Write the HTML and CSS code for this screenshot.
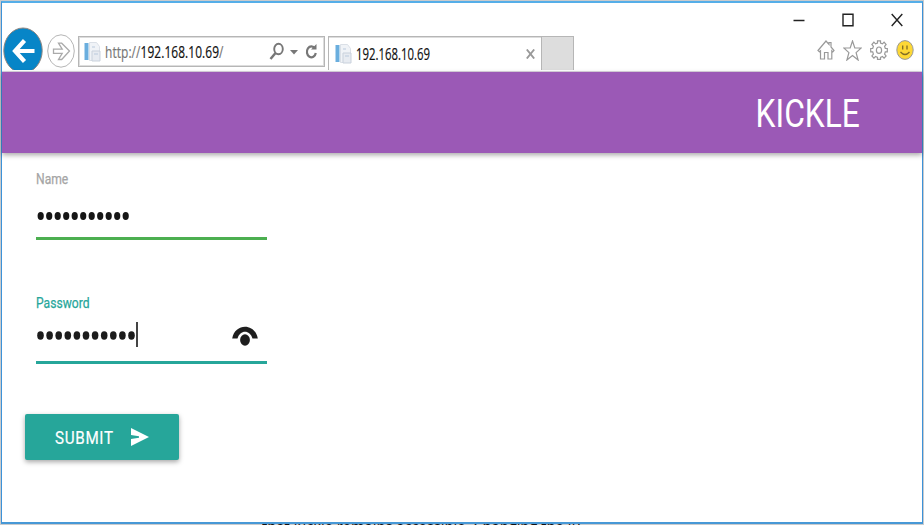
FILE: index.html
```
<!DOCTYPE html>
<html lang="en">
<head>
<meta charset="utf-8">
<title>KICKLE</title>
<link rel="stylesheet" href="styles.css">
</head>
<body>
<div class="window">
  <header class="chrome">
    <div class="caption">
      <svg width="12" height="14" viewBox="0 0 12 14"><path d="M.5 7.5h11" stroke="#222" stroke-width="1.5"/></svg>
      <svg width="12" height="14" viewBox="0 0 12 14"><path d="M1 1.2h10v11.6H1z" fill="none" stroke="#222" stroke-width="1.4"/></svg>
      <svg width="12" height="14" viewBox="0 0 12 14"><path d="M.7 1 11.3 13M11.3 1 .7 13" stroke="#222" stroke-width="1.4"/></svg>
    </div>
    <div class="toolbar">
      <svg class="back" width="41" height="43" viewBox="0 0 41 43"><ellipse cx="20" cy="23.500" rx="19.2" ry="22.5" fill="#0785c7" stroke="#8d8580" stroke-width="1"/><path d="M31.500 24H11.500M21.500 13.500 12 24l9.500 10.500" fill="none" stroke="#fff" stroke-width="4.200"/></svg>
      <svg class="forward" width="28" height="34" viewBox="0 0 28 34"><ellipse cx="14" cy="17" rx="13.300" ry="16.200" fill="#fff" stroke="#b5b5b5"/><path d="M6.500 15.200h8.700l-3.700-6h3.200L22.500 17l-7.800 8.500h-3.200l3.700-6.200H6.500z" fill="#fff" stroke="#aaa" stroke-width="1.300"/></svg>
      <div class="address">
        <svg class="page" width="17" height="20" viewBox="0 0 17 20"><path d="M.5 1h4v17h-4z" fill="#6aaede"/><path d="M5.500.5h7l3 4v14h-10z" fill="#f0f3f7" stroke="#dbe0e7"/><path d="M8 9h8v10H8z" fill="#e7ebf1" stroke="#c9d1dc"/><path d="M8 5h3M10 12h4" stroke="#b9c9dc"/></svg>
        <span class="url"><span class="dim">http://</span>192.168.10.69<span class="dim">/</span></span>
        <svg class="tools" width="50" height="20" viewBox="0 0 50 20"><ellipse cx="9.500" cy="7" rx="4.300" ry="5.200" fill="none" stroke="#777" stroke-width="1.900"/><path d="M6.500 11 1.500 17" stroke="#777" stroke-width="2.500"/><path d="M21 8h8l-4 4.500z" fill="#777"/><path d="M46 6.500a4.500 5.500 0 1 0 .8 4.500" fill="none" stroke="#777" stroke-width="2.200"/><path d="M42 7.500h5.500V2z" fill="#777"/></svg>
      </div>
      <div class="tab">
        <svg class="page" width="17" height="20" viewBox="0 0 17 20"><path d="M.5 1h4v17h-4z" fill="#6aaede"/><path d="M5.500.5h7l3 4v14h-10z" fill="#f0f3f7" stroke="#dbe0e7"/><path d="M8 9h8v10H8z" fill="#e7ebf1" stroke="#c9d1dc"/><path d="M8 5h3M10 12h4" stroke="#b9c9dc"/></svg>
        <span class="tab-title">192.168.10.69</span>
        <svg class="tab-close" width="9" height="10" viewBox="0 0 9 10"><path d="M.8.5 8.200 9.500M8.200.5.8 9.500" stroke="#999" stroke-width="1.900"/></svg>
      </div>
      <div class="new-tab"></div>
      <div class="actions">
        <svg width="18" height="20" viewBox="0 0 18 20"><path d="M1 10.500 9 1l3 3.500V2.500h2v4.500l3 3.500-1.200 1.300-1-1V19H11v-6.500H7.500V19H3.500v-8.200l-1.200 1z" fill="#fff" stroke="#999" stroke-width="1.200"/></svg>
        <svg width="19" height="21" viewBox="0 0 19 21"><path d="m9.500 1 2.300 7h6.400l-5.100 4.600 2 7.400-5.600-4.500L3.900 20l2-7.400L.8 8h6.400z" fill="#fff" stroke="#999" stroke-width="1.200"/></svg>
        <svg width="18" height="20" viewBox="0 0 18 20"><path d="M7.500 3V.8h3V3l2 .9 1.600-1.700 2 2.300-1.500 1.800.7 2.200h2v3.400h-2l-.7 2.200 1.500 1.900-2 2.200-1.600-1.700-2 .9v2h-3v-2l-2-.9-1.600 1.700-2-2.200 1.500-1.900-.7-2.200h-2V8.500h2l.7-2.200-1.500-1.800 2-2.300 1.600 1.700z" fill="#fff" stroke="#999" stroke-width="1.200"/><ellipse cx="9" cy="10.200" rx="2.600" ry="3.200" fill="#fff" stroke="#999" stroke-width="1.200"/></svg>
        <svg width="18" height="20" viewBox="0 0 18 20"><ellipse cx="9" cy="10" rx="8.200" ry="9.400" fill="#fdd835" stroke="#999"/><path d="M6.700 5.500v4M11 5.500v4M4.500 12q4.500 5 9 0" fill="none" stroke="#806c25" stroke-width="1.300"/></svg>
      </div>
    </div>
  </header>
  <nav class="brand-bar"><h1 class="brand">KICKLE</h1></nav>
  <main class="form">
    <div class="field name">
      <label class="label">Name</label>
      <div class="value"><svg width="94" height="10" viewBox="0 0 94 10"><g fill="#161616"><ellipse cx="4.700" cy="5" rx="3.100" ry="4"/><ellipse cx="13.200" cy="5" rx="3.100" ry="4"/><ellipse cx="21.700" cy="5" rx="3.100" ry="4"/><ellipse cx="30.200" cy="5" rx="3.100" ry="4"/><ellipse cx="38.700" cy="5" rx="3.100" ry="4"/><ellipse cx="47.200" cy="5" rx="3.100" ry="4"/><ellipse cx="55.700" cy="5" rx="3.100" ry="4"/><ellipse cx="64.200" cy="5" rx="3.100" ry="4"/><ellipse cx="72.700" cy="5" rx="3.100" ry="4"/><ellipse cx="81.200" cy="5" rx="3.100" ry="4"/><ellipse cx="89.700" cy="5" rx="3.100" ry="4"/></g></svg></div>
    </div>
    <div class="field password">
      <label class="label">Password</label>
      <div class="value"><svg width="100" height="10" viewBox="0 0 100 10"><g fill="#1c1c1c"><ellipse cx="4.500" cy="5.500" rx="3.300" ry="4.200"/><ellipse cx="13.600" cy="5.500" rx="3.300" ry="4.200"/><ellipse cx="22.700" cy="5.500" rx="3.300" ry="4.200"/><ellipse cx="31.800" cy="5.500" rx="3.300" ry="4.200"/><ellipse cx="40.900" cy="5.500" rx="3.300" ry="4.200"/><ellipse cx="50" cy="5.500" rx="3.300" ry="4.200"/><ellipse cx="59.100" cy="5.500" rx="3.300" ry="4.200"/><ellipse cx="68.200" cy="5.500" rx="3.300" ry="4.200"/><ellipse cx="77.300" cy="5.500" rx="3.300" ry="4.200"/><ellipse cx="86.400" cy="5.500" rx="3.300" ry="4.200"/><ellipse cx="95.500" cy="5.500" rx="3.300" ry="4.200"/></g></svg><i class="caret"></i>
      <svg class="reveal" width="26" height="20" viewBox="0 0 26 20"><path d="M.2 12.500C3-3.200 23-3.200 25.800 12.500H20.500C18 3.500 8 3.500 5.500 12.500z" fill="#1e1e1e"/><ellipse cx="13" cy="14" rx="4.900" ry="5.800" fill="#1e1e1e"/></svg></div>
    </div>
    <button class="submit" type="button"><span class="submit-text">SUBMIT</span><svg width="18" height="18" viewBox="0 0 18 18"><path d="M0 0 18 9 0 18v-7l8-1.200V8.200L0 7z" fill="#fff"/></svg></button>
  </main>
</div>
<div class="behind"><p class="behind-text">that Kickle remains accessible. Changing the IP</p></div>
</body>
</html>
```
FILE: styles.css
```
* { box-sizing: border-box; }
body { margin: 0; height: 525px; overflow: hidden; padding: 1px 1px 0; background: #c9cbcd; font-family: Roboto, "Liberation Sans", sans-serif; }
svg { display: block; flex: none; }
.window { height: 523px; border: 1px solid #3c92d8; border-top: 2px solid #55aee8; border-bottom: 2px solid #4798d6; background: #fff; display: flex; flex-direction: column; }
.chrome { height: 69px; border-bottom: 1px solid #ddd5e1; flex: none; }
.caption { height: 24px; display: flex; justify-content: flex-end; gap: 37px; padding: 10px 19px 0 0; }
.toolbar { height: 44px; display: flex; align-items: flex-start; padding-left: 1px; }
.forward { margin: 7px 0 0 3px; }
.address { width: 247px; height: 31px; margin: 9px 0 0 3px; border: 1px solid #b6b6b6; box-shadow: inset 0 0 0 1px #ddd; display: flex; align-items: center; padding: 0 5px 0 5px; }
.url, .tab-title { font: 16px/28px "Open Sans", sans-serif; color: #111; white-space: nowrap; transform: scaleX(.745); transform-origin: left; -webkit-text-stroke: .2px; }
.url { width: 150px; margin-left: 4px; letter-spacing: .1px; }
.dim { color: #777; }
.tools { margin-left: auto; }
.tab { width: 214px; height: 34px; margin: 9px 0 0 3px; border: 1px solid #b6b6b6; border-bottom: 0; box-shadow: inset 0 1px #ddd; display: flex; align-items: center; padding: 1px 6px 0; }
.tab-title { width: 120px; margin-left: 4px; transform: scaleX(.71); }
.tab-close { margin-left: auto; }
.new-tab { width: 32px; height: 34px; margin-top: 9px; background: #ddd; border: 1px solid #b6b6b6; border-width: 1px 1px 0 0; }
.actions { margin: 13px 8px 0 auto; display: flex; gap: 8px; }
.brand-bar { height: 81px; flex: none; background: #9b59b6; display: flex; justify-content: flex-end; padding-right: 62px; box-shadow: 0 2px 5px rgba(0,0,0,.35); }
.brand { margin: 0; font-size: 38px; line-height: 84px; font-weight: 400; color: #fff; transform: scaleX(.835); transform-origin: right; }
.form { padding: 18px 0 0 34px; }
.field { width: 231px; height: 124px; }
.label { display: block; font-size: 14.5px; line-height: 18px; height: 18px; transform: scaleX(.835); transform-origin: left; color: #a5a5a5; -webkit-text-stroke: .25px; }
.value { height: 51px; display: flex; align-items: center; border-bottom: 3px solid #4caf50; }
.name .value { padding-top: 5px; }
.password { height: 119px; }
.password .label { color: #26a69a; }
.password .value { border-bottom-color: #26a69a; padding-bottom: 4px; }
.caret { width: 1.5px; height: 25px; margin-top: -2px; background: #444; }
.reveal { margin: 2px 9px 0 auto; }
.submit { width: 154px; height: 46px; margin-left: -11px; padding: 0 0 0 30px; border: 0; border-radius: 2px; background: #26a69a; color: #fff; display: flex; align-items: center; box-shadow: 0 2px 5px rgba(0,0,0,.35); font-family: inherit; }
.submit-text { width: 76px; text-align: left; font-size: 18px; letter-spacing: .8px; transform: scaleX(.845); transform-origin: left; -webkit-text-stroke: .2px; }
.behind { height: 1px; overflow: hidden; }
.behind-text { margin: -7px 0 0 261px; font: 15px/18px "Open Sans", sans-serif; color: #111; white-space: nowrap; transform: scaleX(.98); transform-origin: left; }
```
